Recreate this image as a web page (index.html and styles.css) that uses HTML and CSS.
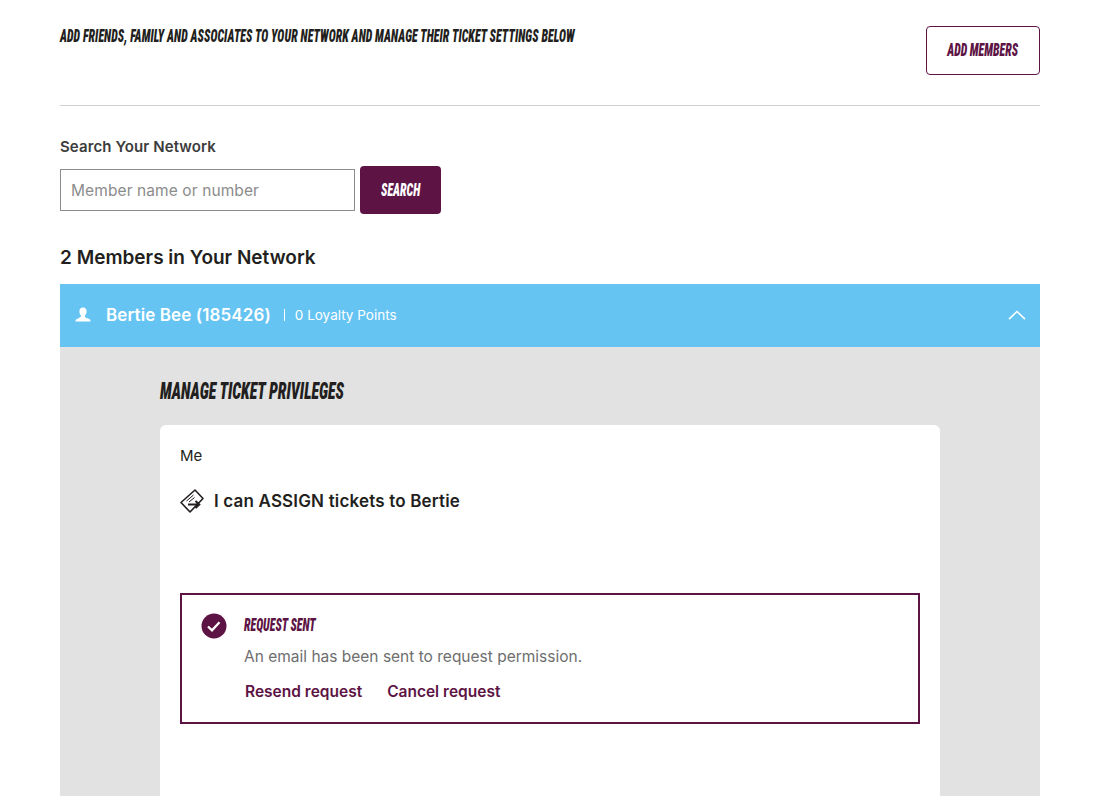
FILE: index.html
```html
<!DOCTYPE html>
<html lang="en">
<head>
    <meta charset="UTF-8">
    <meta name="viewport" content="width=device-width, initial-scale=1.0">
    <title>Your Network</title>
    <link rel="stylesheet" href="styles.css">
</head>
<body>
    <div class="page">
        <div class="intro">
            <p class="intro-text condensed"><span class="squeeze">Add friends, family and associates to your network and manage their ticket settings below</span></p>
            <a class="add-button condensed" href="#"><span class="squeeze">Add members</span></a>
        </div>

        <label class="search-label" for="member-search">Search Your Network</label>
        <div class="search-row">
            <input class="search-input" id="member-search" type="text" placeholder="Member name or number">
            <button class="search-button condensed"><span class="squeeze">Search</span></button>
        </div>

        <h2 class="members-title">2 Members in Your Network</h2>

        <div class="member-bar">
            <svg class="member-icon" viewBox="0 0 16 16" width="16" height="16">
                <path d="M8 0.5c2.3 0 3.6 1.7 3.6 3.9 0 1.700-.7 3.200-1.600 4v1.300c0 .6 1 1 2.400 1.500 1.500.5 2.800 1 3 2.100l.1 1.200H.5l.1-1.200c.2-1.100 1.500-1.600 3-2.100C5 10.200 6 9.800 6 9.200V8.400c-.9-.8-1.600-2.300-1.600-4C4.400 2.200 5.700.5 8 .5z" fill="#fff"/>
            </svg>
            <span class="member-name">Bertie Bee (185426)</span>
            <span class="member-points">0 Loyalty Points</span>
            <svg class="chevron" viewBox="0 0 18 10" width="18" height="10">
                <path d="M1 9.200 9 1.500l8 7.700" fill="none" stroke="#fff" stroke-width="1.600"/>
            </svg>
        </div>

        <div class="member-panel">
            <h3 class="panel-title condensed"><span class="squeeze">Manage ticket privileges</span></h3>
            <div class="card">
                <p class="card-who">Me</p>
                <div class="assign-row">
                    <svg class="ticket-icon" viewBox="0 0 24 24" width="24" height="24">
                        <path d="M1 13.500 15 1l8 8.500L10 23z" fill="none" stroke="#231f20" stroke-width="1.600" stroke-linejoin="round"/>
                        <path d="M6.500 12 13.500 6M9 13l5.500-4.500" fill="none" stroke="#231f20" stroke-width="1"/>
                        <path d="M8 15.500h11M15.500 12l3.800 3.500-3.800 3.500" fill="none" stroke="#231f20" stroke-width="2"/>
                    </svg>
                    <span class="assign-text">I can ASSIGN tickets to Bertie</span>
                </div>
                <div class="notice">
                    <svg class="notice-icon" viewBox="0 0 26 26" width="26" height="26">
                        <circle cx="13" cy="13" r="12.500" fill="#5d1445"/>
                        <path d="M7 13.500l4 3.800 7.500-8" fill="none" stroke="#fff" stroke-width="2.300"/>
                    </svg>
                    <div class="notice-body">
                        <h4 class="notice-title condensed"><span class="squeeze">Request sent</span></h4>
                        <p class="notice-text">An email has been sent to request permission.</p>
                        <div class="notice-links">
                            <a href="#">Resend request</a>
                            <a href="#">Cancel request</a>
                        </div>
                    </div>
                </div>
            </div>
        </div>
    </div>
</body>
</html>
```

FILE: styles.css
```css
html, body {
    margin: 0;
    padding: 0;
    height: 796px;
    overflow: hidden;
    background-color: #fff;
    color: #231f20;
    font-family: 'Inter', 'Liberation Sans', sans-serif;
}
.page {
    width: 980px;
    margin-left: 60px;
}
.condensed {
    font-family: 'Roboto', 'Liberation Sans', sans-serif;
    font-stretch: 75%;
    font-weight: 900;
    font-style: italic;
    text-transform: uppercase;
    white-space: nowrap;
}
/* no display condensed font here, so squeeze the narrowest one we have */
.squeeze {
    display: inline-block;
    transform: scaleX(0.66);
    transform-origin: left center;
}
.add-button .squeeze, .search-button .squeeze {
    transform-origin: center;
}
.intro {
    display: flex;
    justify-content: space-between;
    align-items: flex-start;
    padding-top: 26px;
    padding-bottom: 30px;
    border-bottom: 1px solid #d0d0d0;
}
.intro-text {
    margin: 0;
    padding-top: 2px;
    font-size: 18px;
    line-height: 16px;
    letter-spacing: 0.12px;
}
.add-button {
    box-sizing: border-box;
    width: 114px;
    height: 49px;
    border: 1px solid #5d1445;
    border-radius: 4px;
    color: #5d1445;
    font-size: 18px;
    line-height: 46px;
    text-align: center;
    text-decoration: none;
}
.search-label {
    display: block;
    margin-top: 32px;
    font-size: 15px;
    font-weight: 600;
    line-height: 18px;
    letter-spacing: 0.1px;
    color: #3c3c3c;
}
.search-row {
    display: flex;
    align-items: center;
    gap: 5px;
    margin-top: 10px;
}
.search-input {
    box-sizing: border-box;
    width: 295px;
    height: 42px;
    padding: 0 10px;
    border: 1px solid #8c8c8c;
    border-radius: 0;
    font-family: inherit;
    font-size: 15.500px;
    letter-spacing: 0.1px;
}
.search-input::placeholder {
    color: #8c8c8c;
}
.search-button {
    width: 81px;
    height: 48px;
    padding: 0 0 2px;
    border: none;
    border-radius: 4px;
    background-color: #5d1445;
    color: #fff;
    font-size: 18px;
}
.members-title {
    margin: 32px 0 14px;
    font-size: 19px;
    font-weight: 600;
    line-height: 24px;
}
.member-bar {
    display: flex;
    align-items: center;
    box-sizing: border-box;
    height: 63px;
    padding: 0 14px 2px 15px;
    background-color: #66c4f3;
    color: #fff;
}
.member-icon {
    margin-right: 15px;
}
.member-name {
    font-size: 17px;
    font-weight: 600;
    letter-spacing: 0.1px;
}
.member-points {
    margin-left: 13px;
    padding-left: 10px;
    border-left: 1px solid #fff;
    font-size: 13.500px;
    line-height: 12px;
}
.chevron {
    margin-left: auto;
}
.member-panel {
    padding: 32px 100px 0;
    background-color: #e2e2e2;
}
.panel-title {
    margin: 0 0 21px;
    font-size: 24px;
    line-height: 25px;
}
.card {
    height: 500px;
    padding: 21px 20px 20px;
    border-radius: 6px;
    background-color: #fff;
}
.card-who {
    margin: 0;
    font-size: 15px;
    line-height: 20px;
}
.assign-row {
    display: flex;
    align-items: center;
    gap: 10px;
    margin-top: 23px;
}
.assign-text {
    font-size: 17px;
    font-weight: 600;
    letter-spacing: 0.17px;
}
.notice {
    display: flex;
    gap: 17px;
    box-sizing: border-box;
    height: 131px;
    margin-top: 80px;
    padding: 18px 19px;
    border: 2px solid #5d1445;
}
.notice-title {
    margin: 0;
    color: #5d1445;
    font-size: 18px;
    line-height: 24px;
}
.notice-text {
    margin: 10px 0 0;
    color: #6e6e6e;
    font-size: 15.500px;
    line-height: 20px;
}
.notice-links {
    display: flex;
    gap: 25px;
    margin-top: 15px;
    padding-left: 1px;
}
.notice-links a {
    color: #5d1445;
    font-size: 15.500px;
    font-weight: 600;
    line-height: 20px;
    text-decoration: none;
}
```
